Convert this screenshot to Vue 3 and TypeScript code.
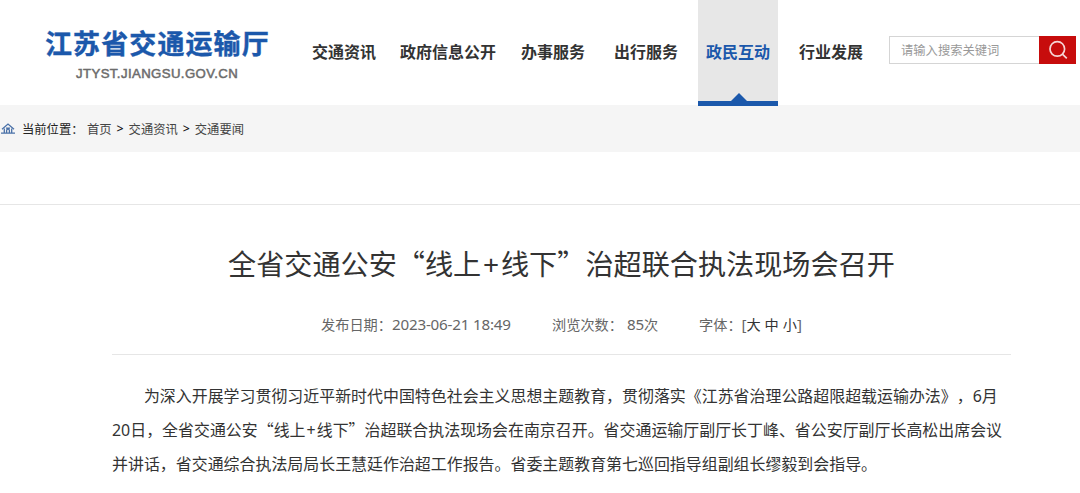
<template>
  <div class="page">
    <header class="header">
      <div class="logo">
        <div class="logo-name">江苏省交通运输厅</div>
        <div class="logo-domain">JTYST.JIANGSU.GOV.CN</div>
      </div>
      <nav class="nav">
        <a
          v-for="item in navList"
          :key="item"
          class="nav-item"
          :class="{ active: item === current }"
          @click="current = item"
        >{{ item }}</a>
      </nav>
      <div class="search">
        <input v-model="keyword" class="search-input" type="text" placeholder="请输入搜索关键词" />
        <button class="search-btn" type="button" aria-label="搜索">
          <svg width="20" height="20" viewBox="0 0 20 20" fill="none" stroke="#f6d5d5" stroke-width="1.7">
            <circle cx="9.3" cy="8.9" r="7.3" />
            <path d="M14.4 14.1L18.8 18.3" />
          </svg>
        </button>
      </div>
    </header>

    <div class="crumb">
      <svg class="home" width="14" height="11" viewBox="0 0 14 11" fill="none" stroke="#4a71a8" stroke-width="1.3">
        <path d="M1 6.2L7 1L13 6.2" />
        <path d="M3.3 5.6V9.8M10.7 5.6V9.8M0 10.1H14" />
        <path d="M5.6 10V7.6a1.4 1.4 0 0 1 2.8 0V10M5 5.1h4" />
      </svg>
      <span class="crumb-label">当前位置：</span>
      <a>首页</a>
      <i>&gt;</i>
      <a>交通资讯</a>
      <i>&gt;</i>
      <a>交通要闻</a>
    </div>

    <main class="article">
      <h1 class="title">全省交通公安“线上<span class="plus">+</span>线下”治超联合执法现场会召开</h1>
      <div class="meta">
        <span class="meta-date">发布日期：<b class="date">2023-06-21 18:49</b></span>
        <span class="meta-views">浏览次数：<b class="views">85</b>次</span>
        <span class="meta-size">字体：<b>[</b><a
          v-for="size in sizes"
          :key="size"
        >{{ size }}</a><b>]</b></span>
      </div>
      <div class="content">
        <p class="indent">为深入开展学习贯彻习近平新时代中国特色社会主义思想主题教育，贯彻落实《江苏省治理公路超限超载运输办法》，<b>6</b>月</p>
        <p><b>20</b>日，全省交通公安“线上<span class="plus">+</span>线下”治超联合执法现场会在南京召开。省交通运输厅副厅长丁峰、省公安厅副厅长高松出席会议</p>
        <p>并讲话，省交通综合执法局局长王慧廷作治超工作报告。省委主题教育第七巡回指导组副组长缪毅到会指导。</p>
      </div>
    </main>
  </div>
</template>

<script setup lang="ts">
import { ref } from 'vue';

const navList: string[] = ['交通资讯', '政府信息公开', '办事服务', '出行服务', '政民互动', '行业发展'];
const sizes: string[] = ['大', '中', '小'];

const current = ref<string>('政民互动');
const keyword = ref<string>('');
</script>

<style>
body {
  margin: 0;
  background: #fff;
}
</style>

<style scoped>
.page {
  width: 1080px;
  height: 493px;
  overflow: hidden;
  color: #333;
  font-family: 'Noto Sans CJK SC', sans-serif;
  text-spacing-trim: space-all;
  white-space: nowrap;
}

b,
i {
  font-family: 'Noto Sans', sans-serif;
  font-weight: 400;
  font-style: normal;
}

.header {
  display: flex;
  height: 105px;
}

.logo {
  width: 259px;
  padding: 23px 0 0 45px;
}

.logo-name {
  height: 40px;
  line-height: 40px;
  font-size: 27px;
  font-weight: 700;
  letter-spacing: 1.1px;
  color: #1b58ab;
  -webkit-text-stroke: 0.4px #1b58ab;
}

.logo-domain {
  margin: 2px 0 0 31px;
  line-height: 18px;
  font-family: 'Liberation Sans', sans-serif;
  font-size: 13.2px;
  letter-spacing: 0.4px;
  color: #6c6c6c;
  -webkit-text-stroke: 0.5px #6c6c6c;
}

.nav {
  display: grid;
  grid-template-columns: 88px 121px 93px 92px 93px 80px;
  width: 585px;
}

.nav-item {
  position: relative;
  justify-self: start;
  box-sizing: border-box;
  height: 105px;
  padding: 0 8px;
  line-height: 103px;
  font-size: 16px;
  font-weight: 700;
}

.nav-item.active {
  height: 105.6px;
  color: #1b58ab;
  background: #e7e7e7;
  border-bottom: 5px solid #1b58ab;
}

.nav-item.active::after {
  content: '';
  position: absolute;
  left: 33px;
  bottom: 0;
  border: 8px solid transparent;
  border-top: 0;
  border-bottom-color: #1b58ab;
}

.search {
  display: flex;
  width: 187px;
  height: 28px;
  margin-top: 36px;
}

.search-input {
  box-sizing: border-box;
  width: 150px;
  height: 28px;
  padding: 0 0 0 11px;
  border: 1px solid #d5d5d5;
  border-right: 0;
  border-radius: 0;
  outline: 0;
  font-family: 'Noto Sans CJK SC', sans-serif;
  font-size: 12.3px;
}

.search-input::placeholder {
  color: #999;
}

.search-btn {
  display: flex;
  align-items: center;
  justify-content: center;
  width: 37px;
  height: 28px;
  padding: 0;
  border: 0;
  background: #c70c0c;
}

.crumb {
  display: flex;
  align-items: center;
  height: 47px;
  background: #f5f5f5;
  font-size: 12.3px;
}

.crumb a {
  color: #444;
}

.crumb i {
  width: 17px;
  text-align: center;
  font-weight: 500;
  color: #111;
}

.home {
  margin: 0 7px 0 1px;
}

.crumb-label {
  width: 65px;
  color: #222;
}

.article {
  margin-top: 52px;
  padding: 0 69px 0 112px;
  border-top: 1px solid #e6e6e6;
}

.title {
  height: 44px;
  margin: 36px 0 0 116px;
  line-height: 44px;
  font-size: 28.15px;
  font-weight: 400;
}

.plus {
  display: inline-block;
  width: 0.7em;
  text-align: center;
  font-family: 'Noto Sans', sans-serif;
}

.meta {
  display: flex;
  height: 69px;
  padding-left: 209px;
  border-bottom: 1px solid #e6e6e6;
  line-height: 78px;
  font-size: 14.2px;
  color: #666;
}

.meta b {
  font-size: 15.2px;
  letter-spacing: -0.2px;
}

.meta-date {
  width: 231px;
}

.meta-views {
  width: 147px;
}

.views {
  margin-left: 4px;
}

.meta a {
  margin-right: 4px;
  color: #333;
}

.meta a:last-of-type {
  margin-right: 0;
}

.content {
  padding-top: 23px;
  font-size: 15.95px;
}

.content p {
  margin: 0;
  height: 34px;
  line-height: 34px;
}

.content .indent {
  text-indent: 2em;
}
</style>
